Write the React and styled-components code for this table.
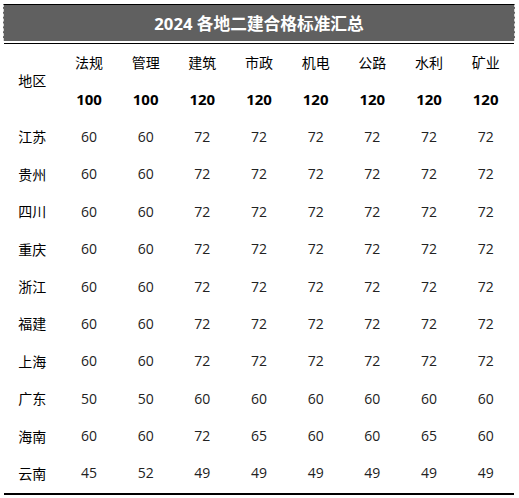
import React from "react";
import styled, { createGlobalStyle } from "styled-components";

const Global = createGlobalStyle`
  html, body { margin: 0; padding: 0; background: #fff; }
  body { font-family: "Open Sans", "Noto Sans CJK SC", sans-serif; }
`;

const Page = styled.div`
  width: 519px;
  padding: 4px 0 0 3px;
  box-sizing: border-box;
`;

const Sheet = styled.div`
  width: 512px;
`;

const TitleBar = styled.div`
  height: 36px;
  background: #606060;
  border-top: 1px solid #000;
  border-left: 1px dashed #d8d8d8;
  border-right: 1px dashed #d8d8d8;
  display: flex;
  align-items: center;
  justify-content: center;
  color: #fff;
  font-weight: 700;
  font-size: 16.7px;
`;

const TitleRule = styled.div`
  margin: 2px 1px 0 1px;
  border-top: 1.5px solid #000;
`;

const Grid = styled.div`
  display: grid;
  grid-template-columns: repeat(9, 1fr);
  grid-auto-rows: 37.4px;
  border-bottom: 2px solid #000;
  margin: 0 1px;
`;

const Cell = styled.div`
  display: flex;
  align-items: center;
  justify-content: center;
  padding-bottom: 2px;
  box-sizing: border-box;
  font-size: ${(p) => (p.$score ? "15px" : "14px")};
  font-weight: ${(p) => (p.$bold ? 700 : 400)};
  color: ${(p) => (p.$bold || p.$head ? "#000" : "#222")};
  grid-row: ${(p) => (p.$span ? "span 2" : "auto")};
`;

const subjects = ["法规", "管理", "建筑", "市政", "机电", "公路", "水利", "矿业"];
const totals = [100, 100, 120, 120, 120, 120, 120, 120];
const rows = [
  ["江苏", [60, 60, 72, 72, 72, 72, 72, 72]],
  ["贵州", [60, 60, 72, 72, 72, 72, 72, 72]],
  ["四川", [60, 60, 72, 72, 72, 72, 72, 72]],
  ["重庆", [60, 60, 72, 72, 72, 72, 72, 72]],
  ["浙江", [60, 60, 72, 72, 72, 72, 72, 72]],
  ["福建", [60, 60, 72, 72, 72, 72, 72, 72]],
  ["上海", [60, 60, 72, 72, 72, 72, 72, 72]],
  ["广东", [50, 50, 60, 60, 60, 60, 60, 60]],
  ["海南", [60, 60, 72, 65, 60, 60, 65, 60]],
  ["云南", [45, 52, 49, 49, 49, 49, 49, 49]],
];

export default function App() {
  return (
    <>
      <Global />
      <Page>
        <Sheet>
          <TitleBar>2024 各地二建合格标准汇总</TitleBar>
          <TitleRule />
          <Grid>
            <Cell $span $head>地区</Cell>
            {subjects.map((s) => (
              <Cell key={s} $head>{s}</Cell>
            ))}
            {totals.map((t, i) => (
              <Cell key={i} $bold $score>{t}</Cell>
            ))}
            {rows.map(([name, vals]) => (
              <React.Fragment key={name}>
                <Cell $head>{name}</Cell>
                {vals.map((v, i) => (
                  <Cell key={i}>{v}</Cell>
                ))}
              </React.Fragment>
            ))}
          </Grid>
        </Sheet>
      </Page>
    </>
  );
}
